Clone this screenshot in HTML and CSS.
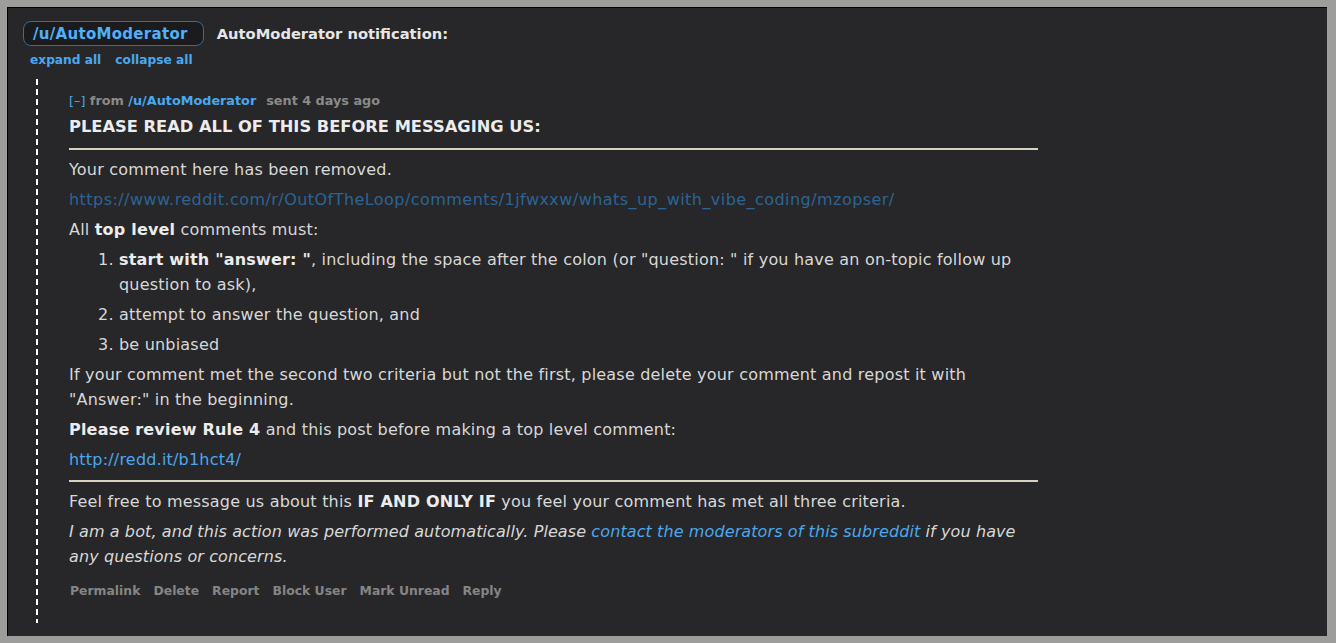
FILE: index.html
```html
<!DOCTYPE html>
<html>
<head>
<meta charset="utf-8">
<link rel="stylesheet" href="styles.css">
</head>
<body>
<div class="frame">
  <div class="head">
    <a class="pill">/u/AutoModerator</a>
    <span class="head-title">AutoModerator notification:</span>
  </div>
  <div class="toggles"><a>expand all</a><a>collapse all</a></div>
  <div class="thread">
    <div class="message">
      <div class="tagline"><span class="expand">[–]</span> from <a class="author">/u/AutoModerator</a><span class="time">sent 4 days ago</span></div>
      <div class="md">
        <p class="title"><strong>PLEASE READ ALL OF THIS BEFORE MESSAGING US:</strong></p>
        <hr>
        <p>Your comment here has been removed.</p>
        <p><a class="dim">https://www.reddit.com/r/OutOfTheLoop/comments/1jfwxxw/whats_up_with_vibe_coding/mzopser/</a></p>
        <p>All <strong>top level</strong> comments must:</p>
        <ol>
          <li><strong>start with "answer: "</strong>, including the space after the colon (or "question: " if you have an on-topic follow up question to ask),</li>
          <li>attempt to answer the question, and</li>
          <li>be unbiased</li>
        </ol>
        <p>If your comment met the second two criteria but not the first, please delete your comment and repost it with "Answer:" in the beginning.</p>
        <p><strong>Please review Rule 4</strong> and this post before making a top level comment:</p>
        <p><a>http://redd.it/b1hct4/</a></p>
        <hr class="hr2">
        <p>Feel free to message us about this <strong>IF AND ONLY IF</strong> you feel your comment has met all three criteria.</p>
        <p><em>I am a bot, and this action was performed automatically. Please <a>contact the moderators of this subreddit</a> if you have any questions or concerns.</em></p>
      </div>
      <ul class="buttons">
        <li>Permalink</li>
        <li>Delete</li>
        <li>Report</li>
        <li>Block User</li>
        <li>Mark Unread</li>
        <li>Reply</li>
      </ul>
    </div>
  </div>
</div>
</body>
</html>
```

FILE: styles.css
```css
html, body {
  margin: 0;
  padding: 0;
  background: #9d9d9b;
  font-family: "DejaVu Sans", Verdana, sans-serif;
}

.frame {
  margin: 7px 9px 0 7px;
  height: 629px;
  background: #272729;
  border-top: 1px solid #000;
  border-left: 1px solid #000;
  padding: 13px 0 0 15px;
  box-sizing: border-box;
  color: #d8d8d8;
  overflow: hidden;
}

a {
  color: #4aa8ef;
  text-decoration: none;
}

.head {
  display: flex;
  align-items: center;
  gap: 13px;
}

.pill {
  display: inline-block;
  border: 1px solid #2f6ea6;
  border-radius: 8px;
  background: #1b1b1d;
  color: #4fb0fb;
  font-weight: bold;
  font-size: 15px;
  line-height: 18px;
  padding: 3px 15px 2px 9px;
  letter-spacing: 0.3px;
}

.head-title {
  font-weight: bold;
  font-size: 14.7px;
  color: #e6e6e6;
}

.toggles {
  margin: 7px 0 0 7px;
  display: flex;
  gap: 14px;
  font-size: 12.2px;
  font-weight: bold;
}

.toggles a {
  color: #4aa8ef;
}

.thread {
  margin: 12px 0 0 13px;
  border-left: 2px dashed #ffffff;
  border-image: repeating-linear-gradient(to bottom, #fff 0 6px, transparent 6px 10px) 0 0 0 2 / 0 0 0 2px;
  height: 544px;
  padding-left: 31px;
  padding-top: 14px;
  box-sizing: border-box;
}

.message {
  width: 969px;
}

.tagline {
  font-size: 12.8px;
  font-weight: bold;
  color: #8a8a8a;
  line-height: 16px;
}

.tagline .expand {
  color: #4aa8ef;
  font-weight: normal;
}

.tagline .author {
  color: #4aa8ef;
  margin-right: 10px;
}

.md {
  font-size: 16px;
  line-height: 25px;
  letter-spacing: 0.2px;
}

.md p {
  margin: 5px 0 0 0;
}

.md p.title {
  margin-top: 5px;
  font-size: 16.3px;
  letter-spacing: 0;
}

.md strong {
  color: #ececec;
}

.md hr {
  border: 0;
  height: 2px;
  background: #d6d2bf;
  margin: 9px 0 7px 0;
}

.md hr.hr2 {
  margin: 8px 0 7px 0;
}

.md a.dim {
  color: #2d6493;
  letter-spacing: 0.45px;
}

.md ol {
  margin: 5px 0 0 0;
  padding-left: 50px;
}

.md ol li {
  margin-top: 5px;
}

.md ol li:first-child {
  margin-top: 0;
}

.md em {
  font-style: italic;
  letter-spacing: 0.1px;
}

.buttons {
  list-style: none;
  margin: 14px 0 0 1px;
  padding: 0;
  display: flex;
  gap: 13px;
  font-size: 12.4px;
  line-height: 16px;
  font-weight: bold;
  color: #858585;
}
```
